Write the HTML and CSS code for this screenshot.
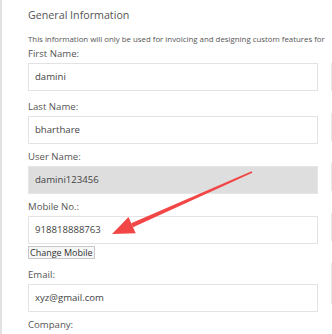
FILE: index.html
```html
<!DOCTYPE html>
<html>
<head>
<meta charset="utf-8">
<link rel="stylesheet" href="styles.css">
</head>
<body>
<div class="page">
  <h2 class="title">General Information</h2>
  <p class="note">This information will only be used for invoicing and designing custom features for</p>
  <div class="cols">
    <div class="col">
      <div class="field first">
        <label class="label">First Name:</label>
        <div class="input">damini</div>
      </div>
      <div class="field">
        <label class="label">Last Name:</label>
        <div class="input">bharthare</div>
      </div>
      <div class="field">
        <label class="label">User Name:</label>
        <div class="input disabled">damini123456</div>
      </div>
      <div class="field mobile">
        <label class="label">Mobile No.:</label>
        <div class="input">918818888763</div>
        <button class="btn">Change Mobile</button>
      </div>
      <div class="field">
        <label class="label">Email:</label>
        <div class="input">xyz@gmail.com</div>
      </div>
      <div class="field">
        <label class="label">Company:</label>
        <div class="input short"></div>
      </div>
    </div>
    <div class="col col-right">
      <div class="field"><label class="label">&nbsp;</label><div class="input"></div></div>
      <div class="field"><label class="label">&nbsp;</label><div class="input"></div></div>
      <div class="field"><label class="label">&nbsp;</label><div class="input"></div></div>
      <div class="field"><label class="label">&nbsp;</label><div class="input"></div></div>
      <div class="field"><label class="label">&nbsp;</label><div class="input tall"></div></div>
    </div>
  </div>
  <svg class="arrow" width="332" height="334" viewBox="0 0 332 334">
    <polygon points="250.4,172.8 249.6,171.2 129.2,223.2 131,227.2" fill="#f24646"/>
    <polygon points="110,234 126.5,216.9 133.7,233.3" fill="#f24646"/>
  </svg>
</div>
</body>
</html>
```

FILE: styles.css
```css
* { box-sizing: border-box; }
html, body { margin: 0; padding: 0; background: #fff; }
body {
  width: 332px;
  height: 334px;
  overflow: hidden;
  font-family: "Open Sans", "Noto Sans", sans-serif;
  color: #444;
}
.page {
  position: relative;
  height: 334px;
  overflow: hidden;
  border-left: 2px solid #e2e2e2;
  padding: 6px 0 0 26px;
}
.title {
  margin: 0;
  font-size: 10.7px;
  font-weight: 400;
  line-height: 18px;
  color: #555;
}
.note {
  margin: 10px 0 0;
  font-size: 7.85px;
  line-height: 10px;
  white-space: nowrap;
  color: #555;
}
.cols {
  display: grid;
  grid-template-columns: 290px 200px;
  column-gap: 13px;
  margin-top: 3px;
}
.col { display: flex; flex-direction: column; gap: 6px; }
.field { display: flex; flex-direction: column; }
.field.first { margin-bottom: 3px; }
.field.mobile { margin-bottom: 3px; }
.label {
  font-size: 9.6px;
  line-height: 14px;
  margin-bottom: 2px;
  color: #555;
}
.input {
  height: 28px;
  border: 1px solid #e3e3e3;
  padding: 0 6px;
  font-size: 9.6px;
  line-height: 26px;
  color: #444;
  background: #fff;
}
.input.disabled { background: #dedede; border-color: #e6e6e6; }
.input.tall { height: 41px; }
.input.short { height: 10px; }
.btn {
  align-self: flex-start;
  margin-top: 2px;
  height: 13px;
  padding: 0 1px;
  border: 1px solid #c8c8c8;
  background: #f7f7f7;
  font-family: "Open Sans", "Noto Sans", sans-serif;
  font-size: 9px;
  line-height: 11px;
  color: #333;
  border-radius: 0;
}
.col-right .input { border-color: #e8e8e8; }
.arrow { position: absolute; left: 0; top: 0; pointer-events: none; }
```
